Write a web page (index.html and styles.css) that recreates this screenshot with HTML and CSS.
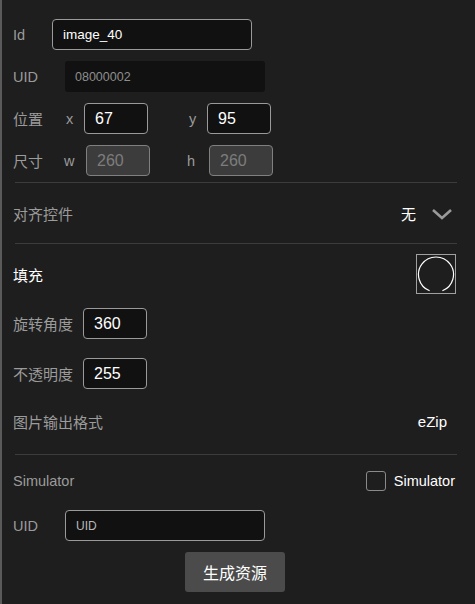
FILE: index.html
```html
<!DOCTYPE html>
<html>
<head>
<meta charset="utf-8">
<link rel="stylesheet" href="styles.css">
</head>
<body>
<div class="panel">
  <div class="row r-id">
    <span class="lbl w39">Id</span>
    <div class="inp wide">image_40</div>
  </div>
  <div class="row r-uid">
    <span class="lbl w52">UID</span>
    <div class="ro">08000002</div>
  </div>
  <div class="row r-pos">
    <span class="lbl cjk w53">位置</span>
    <span class="lbl ax">x</span>
    <div class="inp num">67</div>
    <span class="lbl ay">y</span>
    <div class="inp num">95</div>
  </div>
  <div class="row r-size">
    <span class="lbl cjk w51">尺寸</span>
    <span class="lbl aw">w</span>
    <div class="inp num dis">260</div>
    <span class="lbl ah">h</span>
    <div class="inp num dis">260</div>
  </div>
  <div class="divider d1"></div>
  <div class="row r-align">
    <span class="lbl cjk">对齐控件</span>
    <span class="spacer"></span>
    <span class="val cjk">无</span>
    <svg class="chev" width="22" height="14" viewBox="0 0 22 14"><path d="M2 3 L11 11 L20 3" fill="none" stroke="#9a9a9a" stroke-width="2.6"/></svg>
  </div>
  <div class="divider"></div>
  <div class="row r-fill">
    <span class="lbl cjk white">填充</span>
    <span class="spacer"></span>
    <div class="colorbox">
      <svg width="38" height="38" viewBox="0 0 38 38"><path d="M12.6 35.8 A17.5 17.5 0 1 1 25.4 35.8" fill="none" stroke="#ffffff" stroke-width="1.2"/></svg>
    </div>
  </div>
  <div class="row r-rot">
    <span class="lbl cjk w70">旋转角度</span>
    <div class="inp num">360</div>
  </div>
  <div class="row r-op">
    <span class="lbl cjk w70">不透明度</span>
    <div class="inp num">255</div>
  </div>
  <div class="row r-fmt">
    <span class="lbl cjk">图片输出格式</span>
    <span class="spacer"></span>
    <span class="val ezip">eZip</span>
  </div>
  <div class="divider"></div>
  <div class="row r-sim">
    <span class="lbl">Simulator</span>
    <span class="spacer"></span>
    <span class="chk"></span>
    <span class="val simtxt">Simulator</span>
  </div>
  <div class="row r-uid2">
    <span class="lbl w52">UID</span>
    <div class="inp wide2 ph">UID</div>
  </div>
  <div class="btnrow">
    <div class="btn">生成资源</div>
  </div>
</div>
</body>
</html>
```
FILE: styles.css
```css
html, body {
  margin: 0;
  padding: 0;
  background: #1e1e1e;
}
body {
  width: 475px;
  height: 604px;
  overflow: hidden;
  font-family: "Liberation Sans", "Noto Sans CJK SC", sans-serif;
  font-size: 14px;
}
.panel {
  box-sizing: border-box;
  height: 604px;
  border-left: 2px solid #5a5a5a;
  padding: 19px 18px 0 11px;
  display: flex;
  flex-direction: column;
}
.row {
  display: flex;
  align-items: center;
}
.lbl {
  color: #9b9b9b;
  font-size: 14.5px;
  white-space: nowrap;
}
.lbl.cjk, .val.cjk { font-size: 15px; }
.lbl.white { color: #ffffff; }
.w39 { width: 39px; }
.w52 { width: 52px; }
.w53 { width: 53px; }
.w51 { width: 51px; }
.w70 { width: 70px; }
.ax { width: 18px; }
.ay { width: 18px; margin-left: 41px; }
.aw { width: 22px; }
.ah { width: 22px; margin-left: 37px; }
.spacer { flex: 1; }
.inp {
  box-sizing: border-box;
  height: 31px;
  border: 1px solid #9a9a9a;
  border-radius: 4px;
  background: #111111;
  color: #ffffff;
  display: flex;
  align-items: center;
  padding-left: 10px;
  font-size: 14px;
}
.inp.wide { width: 200px; font-size: 13.5px; }
.inp.wide2 { width: 200px; }
.inp.ph { color: #b8b8b8; font-size: 12px; }
.inp.num { width: 64px; font-size: 16px; }
.inp.dis {
  background: #3c3c3c;
  border-color: #808080;
  color: #7d7d7d;
}
.ro {
  box-sizing: border-box;
  width: 200px;
  height: 31px;
  background: #111111;
  border-radius: 3px;
  color: #8e8e8e;
  font-size: 12.5px;
  display: flex;
  align-items: center;
  padding-left: 10px;
}
.r-uid { margin-top: 11px; }
.r-pos { margin-top: 11px; }
.r-size { margin-top: 11px; }
.divider {
  height: 1px;
  background: #3c3c3c;
  margin-left: 2px;
}
.d1 { margin-top: 6px; }
.r-align { height: 60px; }
.val { color: #ffffff; font-size: 14.5px; }
.chev { margin-left: 15px; margin-right: 4px; margin-top: 2px; }
.r-fill { margin-top: 10px; height: 40px; }
.colorbox {
  box-sizing: border-box;
  width: 40px;
  height: 40px;
  border: 1px solid #a0a0a0;
  display: flex;
  align-items: center;
  justify-content: center;
  margin-right: 1px;
}
.colorbox svg { display: block; }
.r-rot { margin-top: 14px; }
.r-op { margin-top: 19px; }
.r-fmt { height: 65px; }
.ezip { font-size: 15px; margin-right: 10px; }
.r-sim { height: 52px; }
.chk {
  box-sizing: border-box;
  width: 20px;
  height: 20px;
  border: 1px solid #8a8a8a;
  border-radius: 3px;
  margin-right: 8px;
}
.simtxt { margin-right: 2px; }
.r-uid2 { margin-top: 3px; }
.btnrow {
  display: flex;
  justify-content: center;
  margin-top: 11px;
}
.btn {
  width: 100px;
  height: 40px;
  box-sizing: border-box;
  background: #4b4b4b;
  border-radius: 3px;
  color: #ffffff;
  font-size: 16px;
  display: flex;
  align-items: center;
  justify-content: center;
}
```
